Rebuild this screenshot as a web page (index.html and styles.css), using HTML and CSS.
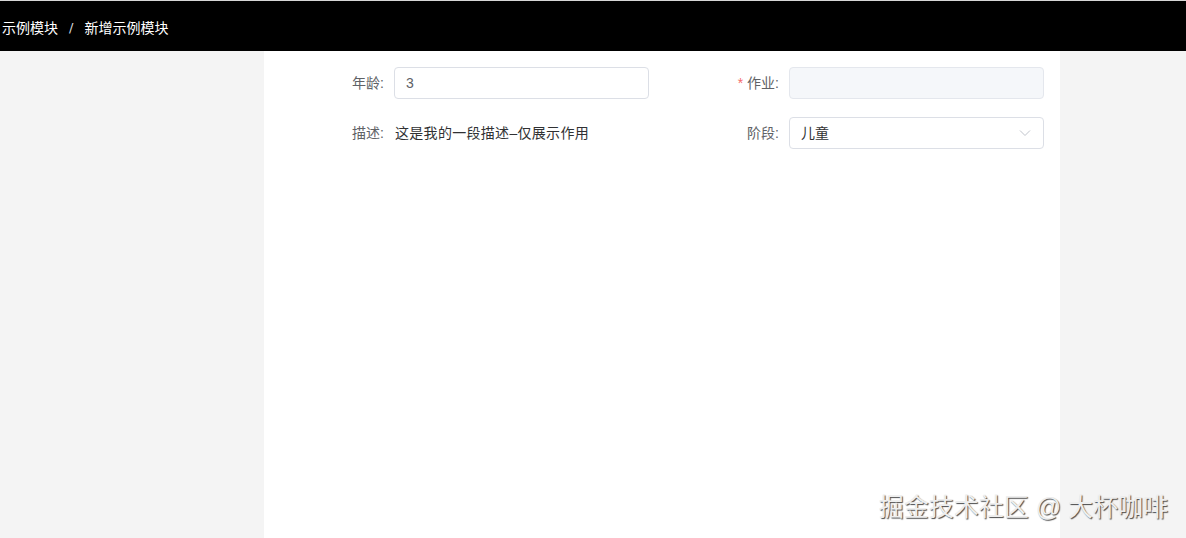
FILE: index.html
```html
<!DOCTYPE html>
<html lang="zh-CN">
<head>
<meta charset="utf-8">
<title>新增示例模块</title>
<link rel="stylesheet" href="styles.css">
</head>
<body>
<header class="topbar">
  <nav class="crumbs">
    <span>示例模块</span>
    <span class="sep">/</span>
    <span>新增示例模块</span>
  </nav>
</header>
<div class="layout">
  <aside class="side"></aside>
  <main class="content">
    <form class="form">
      <div class="item">
        <label class="label">年龄:</label>
        <div class="control"><div class="input">3</div></div>
      </div>
      <div class="item">
        <label class="label"><span class="req">*</span>作业:</label>
        <div class="control"><div class="input disabled"></div></div>
      </div>
      <div class="item">
        <label class="label">描述:</label>
        <div class="control"><span class="text">这是我的一段描述–仅展示作用</span></div>
      </div>
      <div class="item">
        <label class="label">阶段:</label>
        <div class="control">
          <div class="input select">
            <span class="value">儿童</span>
            <svg class="arrow" width="14" height="14" viewBox="0 0 14 14"><path d="M2 4.5 L7 9.5 L12 4.5" fill="none" stroke="#c0c4cc" stroke-width="1"/></svg>
          </div>
        </div>
      </div>
    </form>
  </main>
  <aside class="side right"></aside>
</div>
<div class="mark">掘金技术社区 @ 大杯咖啡</div>
</body>
</html>
```
FILE: styles.css
```css
html, body {
  margin: 0;
  height: 100%;
}
body {
  font-family: "Liberation Sans", "Noto Sans CJK SC", sans-serif;
  font-size: 14px;
  background: #f4f4f4;
  overflow: hidden;
  position: relative;
}
.topbar {
  height: 50px;
  background: #000;
  border-top: 1px solid #d6d6d6;
  display: flex;
  align-items: center;
  padding-left: 2px;
  box-sizing: content-box;
}
.crumbs {
  color: #fff;
  font-size: 14px;
  display: flex;
  align-items: center;
  padding-top: 4px;
  line-height: 20px;
}
.crumbs .sep {
  margin: 0 11px;
  font-family: "DejaVu Sans", sans-serif;
  font-size: 13px;
  color: #ddd;
}
.layout {
  display: grid;
  grid-template-columns: 264px 796px 1fr;
  height: calc(100% - 51px);
}
.side {
  background: #f4f4f4;
}
.content {
  background: #fff;
}
.form {
  display: grid;
  grid-template-columns: 375px 375px;
  column-gap: 20px;
  row-gap: 18px;
  padding: 16px 16px 0 10px;
}
.item {
  display: flex;
  height: 32px;
}
.label {
  width: 120px;
  box-sizing: border-box;
  padding-right: 10px;
  text-align: right;
  line-height: 32px;
  color: #606266;
}
.req {
  color: #f56c6c;
  margin-right: 4px;
}
.control {
  flex: 1;
  display: flex;
  align-items: center;
}
.input {
  box-sizing: border-box;
  width: 100%;
  height: 32px;
  border: 1px solid #dcdfe6;
  border-radius: 4px;
  padding: 0 11px;
  line-height: 30px;
  color: #606266;
  background: #fff;
}
.input.disabled {
  background: #f5f7fa;
  border-color: #e4e7ed;
}
.select {
  display: flex;
  align-items: center;
  justify-content: space-between;
  color: #303133;
}
.text {
  color: #303133;
  line-height: 32px;
  margin-left: 1px;
  letter-spacing: 0.3px;
}
.mark {
  position: absolute;
  right: 18px;
  bottom: 15px;
  font-size: 25px;
  color: #eeeeee;
  text-shadow: 1px 1px 1px #4a4a4a;
}
```
